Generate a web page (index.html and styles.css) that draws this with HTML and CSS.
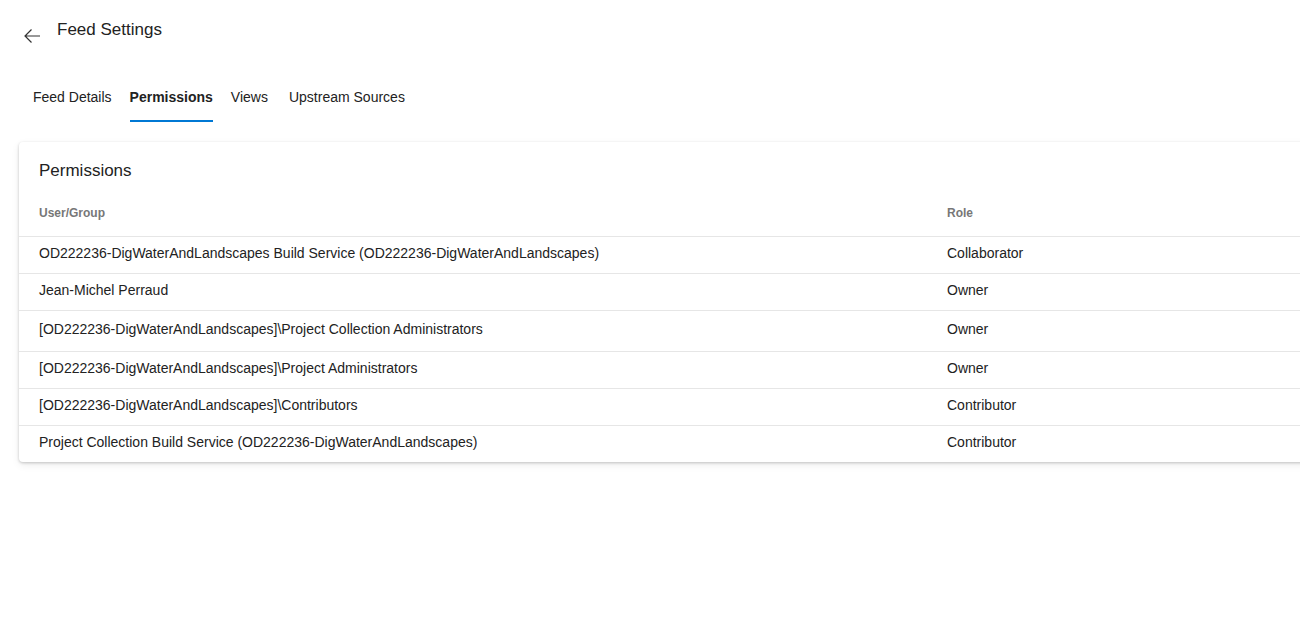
FILE: index.html
```html
<!DOCTYPE html>
<html>
<head>
<meta charset="utf-8">
<link rel="stylesheet" href="styles.css">
</head>
<body>
<div class="page">
  <header class="title-bar">
    <button class="back" aria-label="Back">
      <svg width="18" height="16" viewBox="0 0 18 16"><path d="M17 8H2M8.5 1.5L2 8l6.5 6.5" fill="none" stroke="#333" stroke-width="1.2"/></svg>
    </button>
    <h1 class="title">Feed Settings</h1>
  </header>
  <nav class="tabs">
    <a class="tab">Feed Details</a>
    <a class="tab active">Permissions</a>
    <a class="tab">Views</a>
    <a class="tab">Upstream Sources</a>
  </nav>
  <section class="card">
    <h2 class="card-title">Permissions</h2>
    <div class="table">
      <div class="row head"><div class="c1">User/Group</div><div class="c2">Role</div></div>
      <div class="row"><div class="c1">OD222236-DigWaterAndLandscapes Build Service (OD222236-DigWaterAndLandscapes)</div><div class="c2">Collaborator</div></div>
      <div class="row"><div class="c1">Jean-Michel Perraud</div><div class="c2">Owner</div></div>
      <div class="row tall"><div class="c1">[OD222236-DigWaterAndLandscapes]\Project Collection Administrators</div><div class="c2">Owner</div></div>
      <div class="row"><div class="c1">[OD222236-DigWaterAndLandscapes]\Project Administrators</div><div class="c2">Owner</div></div>
      <div class="row"><div class="c1">[OD222236-DigWaterAndLandscapes]\Contributors</div><div class="c2">Contributor</div></div>
      <div class="row"><div class="c1">Project Collection Build Service (OD222236-DigWaterAndLandscapes)</div><div class="c2">Contributor</div></div>
    </div>
  </section>
</div>
</body>
</html>
```
FILE: styles.css
```css
html, body { margin: 0; padding: 0; overflow: hidden; background: #fff; }
body { font-family: "Liberation Sans", Arial, sans-serif; color: #222; font-size: 14px; }
.page { padding: 0 0 40px 19px; width: 1340px; }
.title-bar { display: flex; align-items: flex-start; height: 60px; }
.back { border: 0; background: none; padding: 0; margin: 28px 0 0 4px; width: 18px; height: 16px; display: flex; }
.title { font-size: 17px; font-weight: normal; margin: 20px 0 0 16px; line-height: 20px; color: #222; }
.tabs { display: flex; margin: 25px 0 0 14px; height: 39px; }
.tab { display: block; margin-right: 18px; line-height: 20px; padding-top: 2px; color: #222; height: 37px; box-sizing: border-box; }
.tab:nth-child(2) { margin-right: 18px; }
.tab:nth-child(3) { margin-right: 21px; }
.tab.active { font-weight: bold; border-bottom: 2px solid #0078d4; }
.card { margin-top: 18px; border-radius: 4px; box-shadow: 0 1px 3px rgba(0,0,0,0.2), 0 3px 8px rgba(0,0,0,0.07); background: #fff; padding-top: 19px; }
.card-title { font-size: 17px; font-weight: normal; margin: 0 0 0 20px; line-height: 20px; }
.table { margin-top: 17px; }
.row { display: flex; align-items: center; height: 37px; padding-bottom: 4px; border-top: 1px solid #e6e6e6; box-sizing: border-box; }
.row.head { border-top: 0; height: 38px; font-size: 12px; font-weight: bold; color: #777; padding-bottom: 8px; }
.row.tall { height: 41px; }
.c1 { width: 908px; padding-left: 20px; }
.c2 { flex: 1; }
```
